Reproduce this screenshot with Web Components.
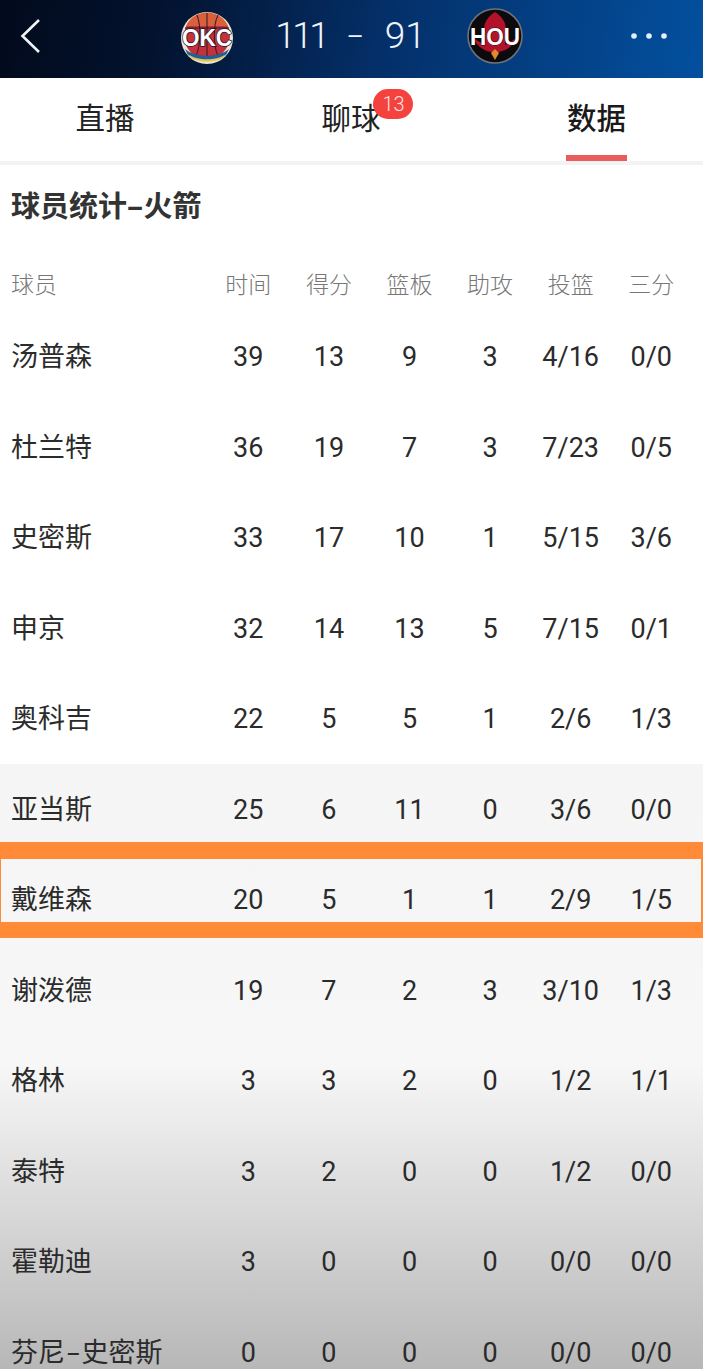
<!DOCTYPE html>
<html lang="zh"><head><meta charset="utf-8"><style>
html,body{margin:0;padding:0;background:#fff}
body{width:703px;height:1369px;overflow:hidden;font-family:Roboto,"Noto Sans CJK SC",sans-serif}
</style></head><body>
<game-header></game-header>
<tab-bar></tab-bar>
<stat-table title="球员统计-火箭"></stat-table>
<script>
const FONT='Roboto,"Noto Sans CJK SC",sans-serif';
const hy=(s,p)=>s.replace('-',`<span style="display:inline-block;padding:0 ${p}px;transform:scaleX(1.7)">-</span>`);
class GameHeader extends HTMLElement{constructor(){super();this.attachShadow({mode:'open'}).innerHTML=`<style>
:host{display:flex;height:78px;align-items:center;box-sizing:border-box;padding:0 36px 7px 20px;background:linear-gradient(100deg,#020a1c 0%,#03122e 22%,#04306a 55%,#03509f 100%);color:#fff;font-family:${FONT}}
svg{flex:none;display:block}
.okc{margin-left:138px;margin-top:4px}
.hou{margin-top:1px}
.more{margin-left:auto}
.score{flex:none;width:233px;font-size:37px;font-weight:300;display:flex;justify-content:center;align-items:center;gap:24px;color:#eef4fa;white-space:nowrap;box-sizing:border-box}
.one{letter-spacing:-3.5px}
.dash{display:inline-block;transform:scaleX(1.5)}
svg text{font-family:"Liberation Sans",Roboto,sans-serif;font-weight:700}
</style>
<svg class="back" width="22" height="36" viewBox="0 0 22 36"><path d="M19 2 L2.5 18 L19 34" fill="none" stroke="#f0f3f7" stroke-width="2.6"/></svg>
<svg class="okc" width="54" height="54" viewBox="0 0 54 54"><circle cx="27" cy="27" r="26" fill="#ece6d2"/><circle cx="27" cy="25" r="23" fill="#c5303a"/><path d="M6 15 A23 23 0 0 1 48 15 Z" fill="#d9603a"/><path d="M27 2V47M17 4C21 14 21 34 16 45M38 4C33 14 33 34 38 45M5 17H49" fill="none" stroke="#2a1a2a" stroke-width="1"/><path d="M5 38C15 47 39 47 49 38L46 44C38 51 16 51 8 44Z" fill="#1f5f9c"/><path d="M8 43C16 50 38 50 46 43L43 47C35 52 19 52 11 47Z" fill="#e3c558"/><text x="27" y="35" text-anchor="middle" font-size="23" textLength="50" lengthAdjust="spacingAndGlyphs" fill="#fff" stroke="#0a1a33" stroke-width="1.400" paint-order="stroke">OKC</text></svg>
<div class="score"><span class="one">111</span><span class="dash">-</span><span>91</span></div>
<svg class="hou" width="56" height="56" viewBox="0 0 56 56"><circle cx="28" cy="28" r="27" fill="#0c0a0d" stroke="#6d7378" stroke-width="1.600"/><path d="M28 4C20 9 16 16 17 25L18 37 6 30C10 39 18 43 24 44H32C38 43 46 39 50 30L38 37 39 25C40 16 36 9 28 4Z" fill="#b2122a"/><path d="M24 45 28 52 32 45 28 41Z" fill="#e08a2a"/><text x="28" y="36.500" text-anchor="middle" font-size="23" textLength="50" lengthAdjust="spacingAndGlyphs" fill="#fff" stroke="#111" stroke-width=".8" paint-order="stroke">HOU</text></svg>
<svg class="more" width="36" height="10" viewBox="0 0 36 10"><circle cx="3" cy="5" r="2.800" fill="#e6eef8"/><circle cx="18" cy="5" r="2.800" fill="#e6eef8"/><circle cx="33" cy="5" r="2.800" fill="#e6eef8"/></svg>`}}
class TabBar extends HTMLElement{constructor(){super();this.attachShadow({mode:'open'}).innerHTML=`<style>
:host{display:grid;grid-template-columns:210px 282px 211px;height:83px;background:#fff;border-bottom:4px solid #f3f3f3;font-family:${FONT};color:#222;font-size:29.500px}
.t{display:flex;align-items:center;justify-content:center;position:relative;padding-bottom:8px;box-sizing:border-box}
.t.on{font-weight:500;color:#1a1a1a;padding-right:2px}
.t.on::after{content:"";position:absolute;left:74px;width:61px;bottom:0;height:6px;background:#e85c5c}
.w{position:relative}
.b{position:absolute;left:52px;top:-6px;width:40px;height:30px;border-radius:15px;background:#f4423e;color:#fbe3e0;font-size:20px;font-weight:300;display:flex;align-items:center;justify-content:center}
</style><div class="t">直播</div><div class="t"><span class="w">聊球<span class="b">13</span></span></div><div class="t on">数据</div>`}}
const COLS='196px repeat(6,80.6px)';
class StatRow extends HTMLElement{constructor(){super();const head=this.hasAttribute('head');const hl=this.hasAttribute('highlight');
const cells=this.getAttribute('cells').split(' ');
this.attachShadow({mode:'open'}).innerHTML=`<style>
:host{display:grid;grid-template-columns:${COLS};padding-left:12px;align-items:center;position:relative;box-sizing:border-box;height:${head?53:90.5}px;padding-bottom:${head?4:0}px;color:${head?'#777':'#2b2b2b'};font-size:${head?'23px':'27px'};font-weight:${head?300:400};font-family:${FONT}}
.c{text-align:center;white-space:nowrap;padding-top:${head?0:2}px}.n{text-align:left;white-space:nowrap;margin-left:-1px;padding-bottom:${head?0:3}px}
.hl{position:absolute;left:0;right:0;top:-12px;height:96px;box-sizing:border-box;border:solid #ff8b39;border-width:17px 2px 16px 1px}
</style>${cells.map((c,i)=>`<div class="${i?'c':'n'}">${hy(c,4.5)}</div>`).join('')}${hl?'<div class="hl"></div>':''}`}}
const D=[['汤普森',39,13,9,3,'4/16','0/0'],['杜兰特',36,19,7,3,'7/23','0/5'],['史密斯',33,17,10,1,'5/15','3/6'],['申京',32,14,13,5,'7/15','0/1'],['奥科吉',22,5,5,1,'2/6','1/3'],['亚当斯',25,6,11,0,'3/6','0/0'],['戴维森',20,5,1,1,'2/9','1/5'],['谢泼德',19,7,2,3,'3/10','1/3'],['格林',3,3,2,0,'1/2','1/1'],['泰特',3,2,0,0,'1/2','0/0'],['霍勒迪',3,0,0,0,'0/0','0/0'],['芬尼-史密斯',0,0,0,0,'0/0','0/0']];
const row=(r,i)=>`<stat-row cells="${r.join(' ')}"${i==6?' highlight':''}></stat-row>`;
class StatTable extends HTMLElement{constructor(){super();this.attachShadow({mode:'open'}).innerHTML=`<style>
:host{display:block;font-family:${FONT};color:#2b2b2b}
h2{margin:0;height:93px;box-sizing:border-box;padding:22px 0 0 11px;font-size:29px;line-height:40px;font-weight:700;color:#333}
.fade{background:linear-gradient(180deg,#f5f5f5 0,#f7f7f7 300px,#b7b7b7 606px)}
</style><h2>${hy(this.getAttribute('title'),2.5)}</h2>
<stat-row head cells="球员 时间 得分 篮板 助攻 投篮 三分"></stat-row>
${D.slice(0,5).map(row).join('')}<div class="fade">${D.slice(5).map((r,i)=>row(r,i+5)).join('')}</div>`}}
customElements.define('stat-row',StatRow);
customElements.define('game-header',GameHeader);
customElements.define('tab-bar',TabBar);
customElements.define('stat-table',StatTable);
</script>
</body></html>
